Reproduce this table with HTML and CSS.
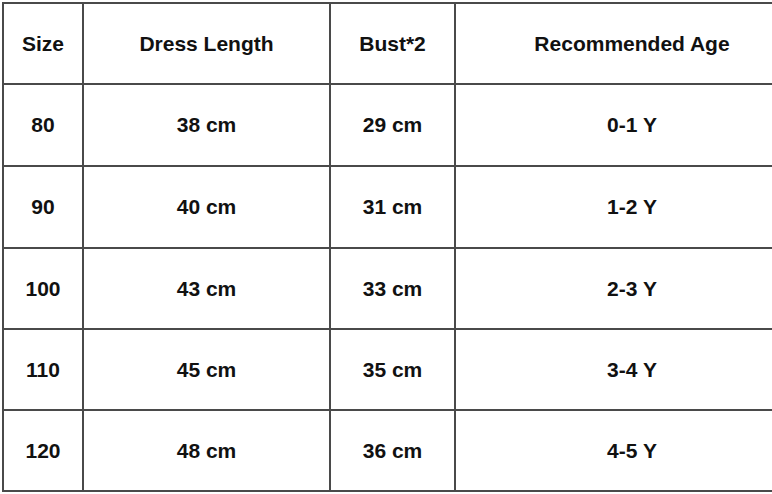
FILE: index.html
```html
<!DOCTYPE html>
<html>
<head>
<meta charset="utf-8">
<link rel="stylesheet" href="styles.css">
</head>
<body>
<div class="size-table">
  <div class="cell">Size</div><div class="cell">Dress Length</div><div class="cell">Bust*2</div><div class="cell last">Recommended Age</div>
  <div class="cell">80</div><div class="cell">38 cm</div><div class="cell">29 cm</div><div class="cell last">0-1 Y</div>
  <div class="cell">90</div><div class="cell">40 cm</div><div class="cell">31 cm</div><div class="cell last">1-2 Y</div>
  <div class="cell">100</div><div class="cell">43 cm</div><div class="cell">33 cm</div><div class="cell last">2-3 Y</div>
  <div class="cell">110</div><div class="cell">45 cm</div><div class="cell">35 cm</div><div class="cell last">3-4 Y</div>
  <div class="cell">120</div><div class="cell">48 cm</div><div class="cell">36 cm</div><div class="cell last">4-5 Y</div>
</div>
</body>
</html>
```
FILE: styles.css
```css
html, body {
  margin: 0;
  padding: 0;
  background: #fff;
}
body {
  padding: 2px 0 0 2px;
}
.size-table {
  display: grid;
  grid-template-columns: 78px 245px 123px 1fr;
  grid-template-rows: 79px 80px 80px 79px 79px 79px;
  gap: 2px;
  padding: 2px 0 2px 2px;
  background: #4a4a4a;
  width: 768px;
  font-family: "Liberation Sans", Arial, sans-serif;
  font-weight: bold;
  font-size: 21px;
  color: #111;
}
.cell {
  background: #fff;
  display: flex;
  align-items: center;
  justify-content: center;
}
.cell.last {
  padding-left: 36px;
}
```
